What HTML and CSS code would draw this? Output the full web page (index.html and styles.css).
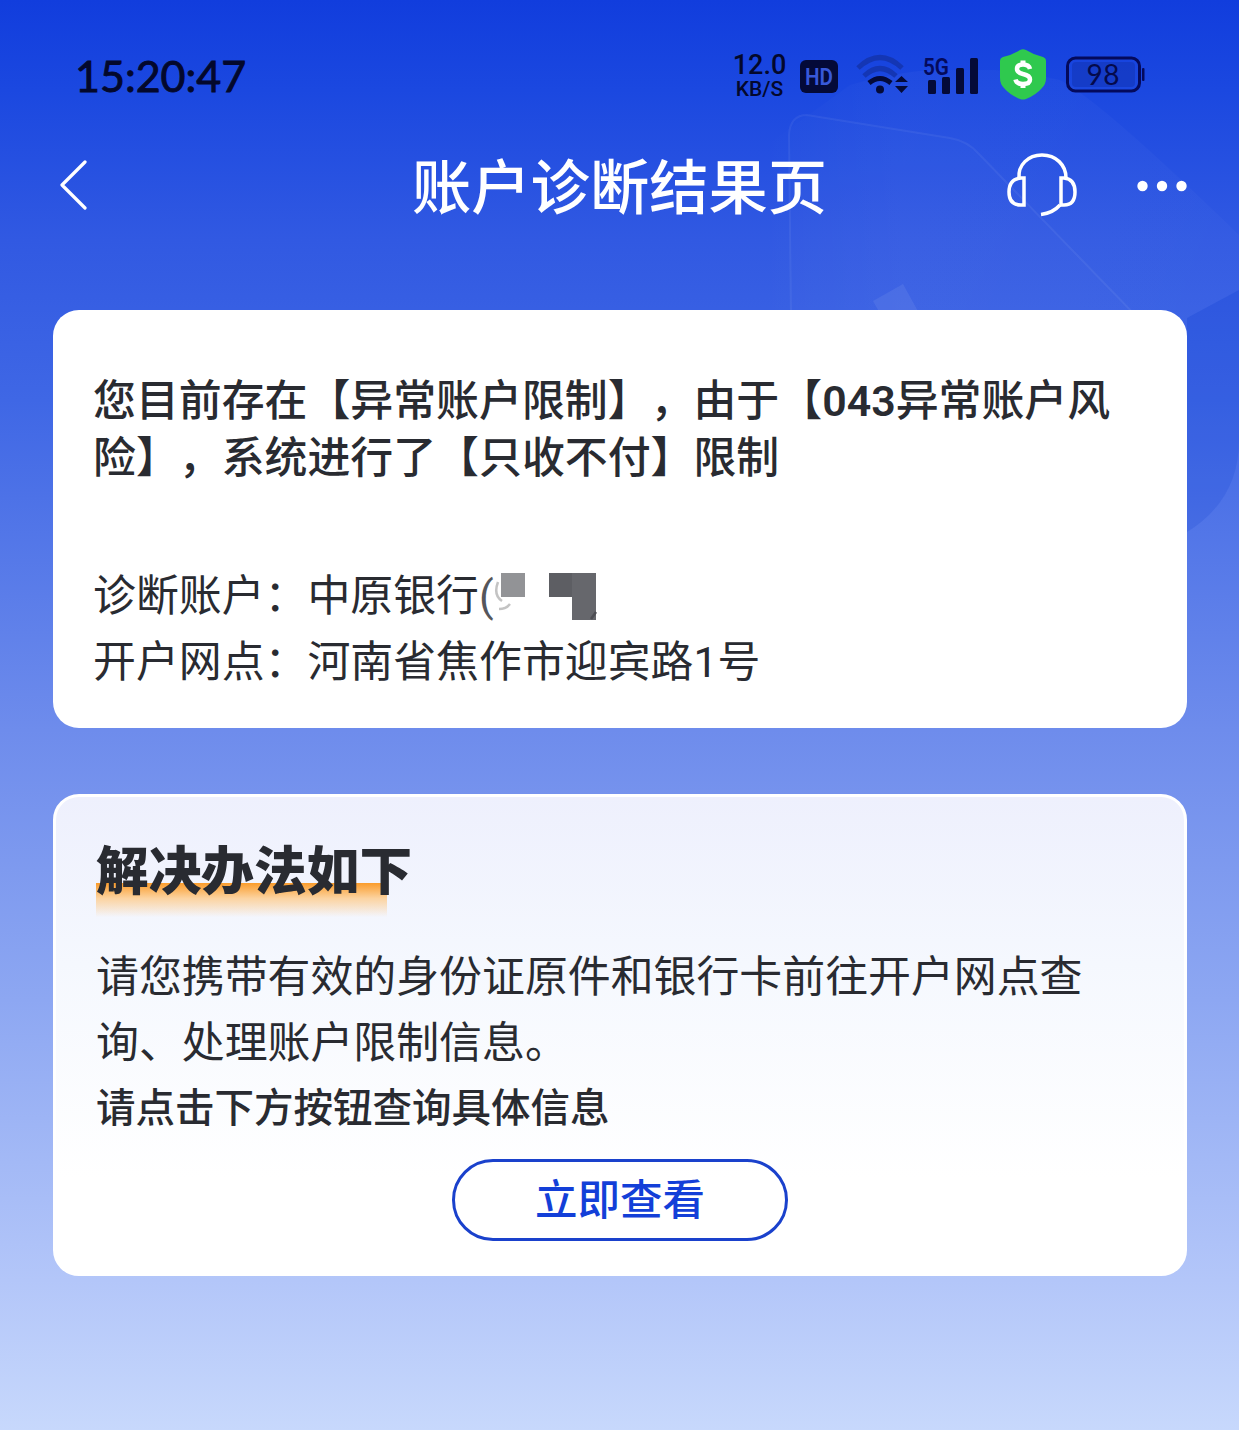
FILE: index.html
```html
<!DOCTYPE html>
<html lang="zh-CN">
<head>
  <meta charset="UTF-8">
  <title>账户诊断结果页</title>
  <link rel="stylesheet" href="styles.css">
</head>
<body>
  <svg class="bg-shape" width="479" height="480" viewBox="760 70 479 480">
    <defs>
      <linearGradient id="glow" x1="0" x2="1">
        <stop offset="0" stop-color="#fff" stop-opacity="0"/>
        <stop offset=".3" stop-color="#fff" stop-opacity=".03"/>
        <stop offset="1" stop-color="#fff" stop-opacity=".02"/>
      </linearGradient>
    </defs>
    <path d="M760 150 L850 85 Q950 55 1060 80 Q1100 100 1239 235 V290 L1187 318 V532 L760 540 Z" fill="url(#glow)"/>
    <path d="M1239 290 L1187 318 V532 Q1239 500 1239 440 Z" fill="#0837d0" fill-opacity=".16"/>
    <path d="M791 320 L789 135 Q790 115 807 115 L950 138 Q968 141 979 154 L1140 320" fill="#fff" fill-opacity=".01" stroke="#fff" stroke-opacity=".06" stroke-width="2"/>
    <path d="M873 301 L903 284 L920 315 H881 Z" fill="#fff" fill-opacity=".07"/>
  </svg>

  <header>
    <div class="status">
      <span class="time">15:20:47</span>
      <div class="speed"><b>12.0</b><span>KB/S</span></div>
      <svg class="hd" width="38" height="33" viewBox="0 0 38 33">
        <rect width="38" height="33" rx="6" fill="#040a38"/>
        <text x="19" y="25" text-anchor="middle" textLength="28" lengthAdjust="spacingAndGlyphs" font-size="24" font-weight="600" fill="#3858d8">HD</text>
      </svg>
      <svg class="wifi" width="52" height="42" viewBox="0 0 52 42">
        <g fill="none" stroke-width="5">
          <path d="M2 14 Q24 -7 46 14" stroke="#1436b4"/>
          <path d="M8 22 Q24 7 40 22" stroke="#1436b4"/>
          <path d="M13 29 Q24 20 35 29" stroke="#040a38"/>
        </g>
        <circle cx="24" cy="35.500" r="4" fill="#040a38"/>
        <path d="M39 28 L45.500 22 L52 28 Z M39 32 L45.500 39 L52 32 Z" fill="#040a38"/>
      </svg>
      <svg class="signal" width="56" height="42" viewBox="0 0 56 42">
        <text x="0" y="21" textLength="26" lengthAdjust="spacingAndGlyphs" font-size="24" font-weight="600" fill="#040a5c">5G</text>
        <g fill="#040a38">
          <rect x="5" y="26" width="8" height="14" rx="1.500"/>
          <rect x="19" y="23" width="8" height="17" rx="1.500"/>
          <rect x="33" y="14" width="8" height="26" rx="1.500"/>
          <rect x="47" y="4" width="8" height="36" rx="1.500"/>
        </g>
      </svg>
      <svg class="shield" width="46" height="51" viewBox="0 0 46 51">
        <path d="M20 1 Q23 -.5 26 1 Q34 6 43 8 Q46 9 46 12 V29 Q46 35 42 39 Q36 46 26 50 Q23 51 20 50 Q10 46 4 39 Q0 35 0 29 V12 Q0 9 3 8 Q12 6 20 1 Z" fill="#2fc94e"/>
        <path d="M30 20 Q29 15.500 23 15.500 Q17 15.500 17 20 Q17 23.500 23 25 Q30 26.500 30 30.500 Q30 35 23 35 Q16.500 35 15.500 30.500" fill="none" stroke="#fff" stroke-width="4.500"/>
        <path d="M23 11.500 V16 M23 34 V39" stroke="#fff" stroke-width="5"/>
      </svg>
      <svg class="battery" width="79" height="38" viewBox="0 0 79 38">
        <rect x="1.500" y="2" width="72" height="33" rx="8" fill="none" stroke="#040a5c" stroke-width="3"/>
        <rect x="6" y="6" width="63" height="25" rx="4" fill="#1236b8" fill-opacity=".6"/>
        <rect x="76" y="12" width="2.500" height="13" rx="1" fill="#040a5c"/>
        <text class="level" x="37" y="28.500" text-anchor="middle" textLength="33" font-size="28" fill="#040a4c">98</text>
      </svg>
    </div>

    <nav>
      <svg class="back" width="28" height="50" viewBox="0 0 28 50">
        <path d="M26 2 L3 25 L26 48" fill="none" stroke="#fff" stroke-width="3.200" stroke-linecap="round" stroke-linejoin="round"/>
      </svg>
      <h1>账户诊断结果页</h1>
      <svg class="service" width="72" height="66" viewBox="0 0 72 66">
        <g fill="none" stroke="#fff" stroke-width="3.500">
          <path d="M13 26 C12 13 22 3 36 3 S60 13 60 26"/>
          <path d="M18 26 H15 Q3 27 3 40 Q3 53 15 53 H18 Z"/>
          <path d="M55 26 H58 Q69 27 69 40 Q69 53 58 53 H55 Z"/>
          <path d="M54 53 Q47 61 35 62.500"/>
        </g>
      </svg>
      <svg class="more" width="50" height="12" viewBox="0 0 50 12">
        <g fill="#fff"><circle cx="5.500" cy="6" r="5.200"/><circle cx="25" cy="6" r="5.200"/><circle cx="44.500" cy="6" r="5.200"/></g>
      </svg>
    </nav>
  </header>

  <main>
    <section class="card result">
      <p class="notice">您目前存在【异常账户限制】，由于【<b>043</b>异常账户风险】，系统进行了【只收不付】限制</p>
      <p class="row">诊断账户：中原银行<span class="paren">(</span><svg class="mask" width="105" height="50" viewBox="0 0 105 50">
        <path d="M4 10 Q-1 23 8 29 M5 37 Q12 37 16 32" fill="none" stroke="#aaa" stroke-opacity=".7" stroke-width="2.500"/>
        <rect x="7" y="1" width="24" height="24" fill="#929396"/>
        <rect x="55" y="1" width="24" height="24" fill="#5d5e63"/>
        <rect x="78" y="1" width="24" height="47" fill="#66676c"/>
        <path d="M97 47 L102 40" stroke="#4d4e53" stroke-width="2.500"/>
      </svg></p>
      <p class="row">开户网点：河南省焦作市迎宾路1号</p>
    </section>

    <section class="card solution">
      <h2>解决办法如下</h2>
      <p class="row">请您携带有效的身份证原件和银行卡前往开户网点查询、处理账户限制信息。</p>
      <p class="tip">请点击下方按钮查询具体信息</p>
      <button>立即查看</button>
    </section>
  </main>
</body>
</html>
```
FILE: styles.css
```css
* { box-sizing: border-box; margin: 0; padding: 0; }
body {
  position: relative;
  height: 1430px;
  overflow: hidden;
  font-family: Roboto, "Noto Sans CJK SC", sans-serif;
  color: #292b31;
  background: linear-gradient(#113ddd 0, #1b48e0 90px, #3159e2 240px, #3f67e5 400px, #6e8cec 730px, #8da7f2 1000px, #b3c6f9 1280px, #c7d8fc 1430px);
  text-spacing-trim: space-all;
  text-autospace: no-autospace;
}
svg { display: block; flex: none; }
.bg-shape { position: absolute; top: 70px; right: 0; }
header, main { position: relative; }

.status { display: flex; align-items: center; height: 150px; padding-left: 75px; color: #03082c; }
.time { width: 657px; font-family: Lato, sans-serif; font-size: 43px; -webkit-text-stroke: 0.9px #03082c; }
.speed { display: flex; flex-direction: column; align-items: center; width: 55px; font-size: 21px; line-height: 20px; font-weight: 500; }
.speed b { font-size: 27px; line-height: 27px; font-weight: 500; }
.hd { margin: 2px 0 0 13px; }
.wifi { margin-left: 18px; }
.signal { margin-left: 15px; }
.shield { margin-left: 21px; margin-top: -1px; }
.battery { margin-left: 20px; }
.level { font-family: Lato, sans-serif; }

nav { display: flex; align-items: center; height: 70px; padding: 0 52px 0 59px; }
.back { margin-top: -1px; }
nav h1 { margin-left: 325px; width: 420px; padding-top: 8px; font-size: 59.3px; line-height: 70px; font-weight: 500; color: #fff; white-space: nowrap; }
.service { margin-left: 174px; }
.more { margin-left: auto; margin-top: 2px; }

main { display: flex; flex-direction: column; gap: 66px; padding: 90px 52px 0 53px; }
.card { border-radius: 26px; background: #fff; }
.result { height: 418px; padding: 63px 40px 0; }
.notice { margin-bottom: 76px; font-size: 42.9px; line-height: 57px; font-weight: 500; }
.notice b { font-weight: 600; }
.row { font-size: 42.9px; line-height: 66px; }
.paren { color: #55565b; }
.mask { display: inline-block; vertical-align: -11px; margin-top: -10px; }

.solution { height: 482px; padding: 42px 40px 0; border: 3px solid #fff; background: linear-gradient(#eef0fd, #f5f8fe 35%, #fff 80%); }
h2 { position: relative; z-index: 0; width: 340px; height: 105px; line-height: 66px; font-size: 52.7px; font-weight: 900; }
h2::before { content: ""; position: absolute; z-index: -1; left: 0; top: 44px; width: 291px; height: 34px; background: linear-gradient(#fa9c2c, #fcd3a0 45%, rgba(255, 235, 210, 0)); }
.tip { font-size: 39.5px; line-height: 66px; font-weight: 500; }
button {
  display: block;
  width: 336px;
  height: 82px;
  margin: 17px auto 0;
  padding-top: 2px;
  border: 3px solid #1a41cc;
  border-radius: 41px;
  background: transparent;
  color: #133fd8;
  font: 500 42.5px/74px Roboto, "Noto Sans CJK SC", sans-serif;
}
```
